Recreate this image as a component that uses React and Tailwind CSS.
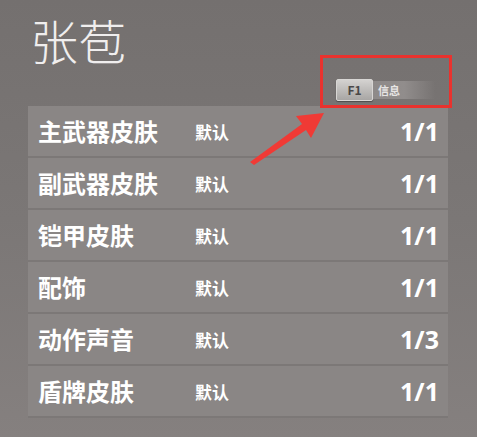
const rows = [
  { name: '主武器皮肤', skin: '默认', count: '1/1' },
  { name: '副武器皮肤', skin: '默认', count: '1/1' },
  { name: '铠甲皮肤', skin: '默认', count: '1/1' },
  { name: '配饰', skin: '默认', count: '1/1' },
  { name: '动作声音', skin: '默认', count: '1/3' },
  { name: '盾牌皮肤', skin: '默认', count: '1/1' }
];

const font = { fontFamily: '"Noto Sans CJK SC", "Noto Sans", sans-serif' };

export default function App() {
  return (
    <div
      className="relative h-[437px] w-[477px] overflow-hidden bg-gradient-to-b from-[#74706f] via-[#7b7776] to-[#85807f]"
      style={font}
    >
      <div className="flex h-[106px] flex-col pl-[30px]">
        <h1 className="h-[79px] pt-[9px] text-[48px] font-light leading-[60px] text-[#f0eeee]">张苞</h1>
        <div className="ml-[306px] flex h-[22px] items-center">
          <div className="flex h-[22px] w-[37px] items-center justify-center rounded-[2px] border border-[#d8d6d4] bg-gradient-to-b from-[#d4d2d0] to-[#a8a6a4] text-[12px] font-bold text-[#4a4848] shadow-[0_1px_1px_rgba(0,0,0,0.35)]">
            F1
          </div>
          <div className="flex h-[18px] w-[62px] items-center bg-gradient-to-r from-[#8e8a89] via-[#918d8c] to-transparent pl-[5px] text-[11px] font-bold text-[#e6e4e3]">
            信息
          </div>
        </div>
      </div>

      <div className="ml-[28px] flex w-[420px] flex-col">
        {rows.map((row) => (
          <div
            className="flex h-[52px] items-center border-b-2 border-[#7c7877] bg-[#8a8685] pl-[10px] pr-[9px] text-white"
            key={row.name}
          >
            <span className="w-[157px] text-[24px] font-bold leading-none">{row.name}</span>
            <span className="text-[17px] font-bold leading-none">{row.skin}</span>
            <span
              className="ml-auto text-[25px] font-bold leading-none"
              style={{ fontFamily: '"Open Sans", "Noto Sans", sans-serif' }}
            >
              {row.count}
            </span>
          </div>
        ))}
      </div>

      <div className="pointer-events-none absolute left-[320px] top-[55px] h-[53px] w-[132px] border-[3px] border-[#e9322e]" />

      <svg className="pointer-events-none absolute left-0 top-0" width="477" height="437" viewBox="0 0 477 437">
        <polygon points="250,162 302,124 296,116 324,113 311,138 306,130 254,165" fill="#f03a35" />
      </svg>
    </div>
  );
}
